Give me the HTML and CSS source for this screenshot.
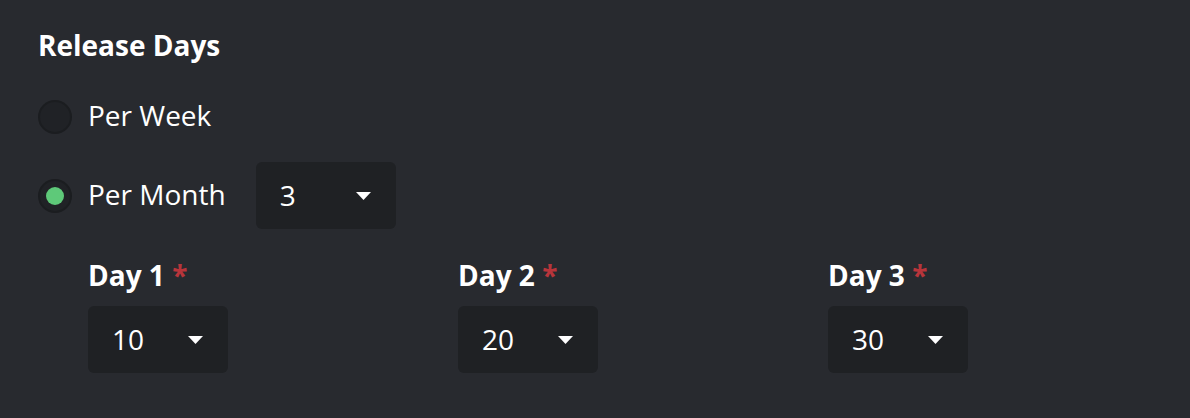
FILE: index.html
```html
<!DOCTYPE html>
<html>
<head>
<meta charset="utf-8">
<link rel="stylesheet" href="styles.css">
</head>
<body>
<div class="panel">
  <h2 class="title">Release Days</h2>
  <div class="options">
    <div class="option">
      <span class="radio"></span>
      <span class="option-label">Per Week</span>
    </div>
    <div class="option">
      <span class="radio checked"><span class="dot"></span></span>
      <span class="option-label">Per Month</span>
      <div class="select month-select">
        <span class="value">3</span>
        <svg class="caret" width="15" height="8" viewBox="0 0 15 8"><path d="M0 0H15L7.5 8Z" fill="#fff"/></svg>
      </div>
    </div>
  </div>
  <div class="days">
    <div class="day">
      <div class="day-label">Day 1 <span class="req">*</span></div>
      <div class="select">
        <span class="value">10</span>
        <svg class="caret" width="15" height="8" viewBox="0 0 15 8"><path d="M0 0H15L7.5 8Z" fill="#fff"/></svg>
      </div>
    </div>
    <div class="day">
      <div class="day-label">Day 2 <span class="req">*</span></div>
      <div class="select">
        <span class="value">20</span>
        <svg class="caret" width="15" height="8" viewBox="0 0 15 8"><path d="M0 0H15L7.5 8Z" fill="#fff"/></svg>
      </div>
    </div>
    <div class="day">
      <div class="day-label">Day 3 <span class="req">*</span></div>
      <div class="select">
        <span class="value">30</span>
        <svg class="caret" width="15" height="8" viewBox="0 0 15 8"><path d="M0 0H15L7.5 8Z" fill="#fff"/></svg>
      </div>
    </div>
  </div>
</div>
</body>
</html>
```

FILE: styles.css
```css
html, body {
  margin: 0;
  padding: 0;
  background: #282a2f;
  color: #ffffff;
  font-family: "Open Sans", "Noto Sans", sans-serif;
}

.panel {
  padding: 27px 38px 0 38px;
}

.title {
  margin: 0;
  font-size: 28px;
  line-height: 36px;
  font-weight: 700;
}

.options {
  display: flex;
  flex-direction: column;
  gap: 12px;
  margin-top: 20px;
}

.option {
  display: flex;
  align-items: center;
  height: 67px;
}

.radio {
  box-sizing: border-box;
  width: 34px;
  height: 34px;
  border-radius: 50%;
  background: #202226;
  border: 2px solid #1b1d20;
  display: flex;
  align-items: center;
  justify-content: center;
  flex: none;
}

.dot {
  width: 18px;
  height: 18px;
  border-radius: 50%;
  background: #5ec979;
}

.option-label {
  margin-left: 16px;
  font-size: 28px;
  line-height: 38px;
  padding-bottom: 3px;
}

.select {
  box-sizing: border-box;
  width: 140px;
  height: 67px;
  border-radius: 6px;
  background: #1f2124;
  display: flex;
  align-items: center;
  justify-content: space-between;
  padding: 0 25px 0 24px;
  font-size: 28px;
}

.month-select {
  margin-left: 30px;
}

.value {
  line-height: 38px;
  padding-bottom: 2px;
}

.caret {
  display: block;
  width: 15px;
  height: 8px;
}

.days {
  display: flex;
  margin-top: 27px;
  margin-left: 50px;
}

.day {
  flex: none;
  width: 370px;
}

.day-label {
  font-size: 28px;
  line-height: 38px;
  font-weight: 700;
  margin-bottom: 12px;
}

.req {
  color: #b8353b;
}
```
